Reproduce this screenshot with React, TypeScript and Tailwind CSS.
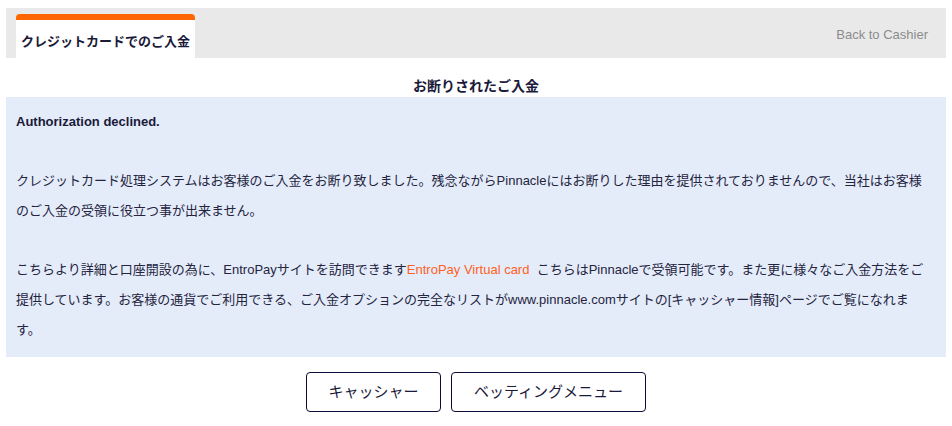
import React from "react";

const font = { fontFamily: '"Liberation Sans", Arial, "Noto Sans CJK JP", sans-serif' };

export default function App() {
  return (
    <div className="w-[952px] h-[426px] bg-white px-[6px] pt-[8px] text-[#1c1c3c]" style={font}>
      {/* header */}
      <div className="h-[50px] bg-[#e9e9e9] flex items-end justify-between">
        <div className="ml-[10px] w-[179px] h-[44px] flex flex-col">
          <div className="h-[6px] bg-[#ff6600] rounded-t-[4px]" />
          <div className="flex-1 bg-white pl-[5px] pt-[14px] text-[13px] leading-[16px] font-bold text-[#1a1a3a] whitespace-nowrap">
            クレジットカードでのご入金
          </div>
        </div>
        <div className="self-start mt-[19px] mr-[18px] text-[13px] leading-[16px] text-[#8c8c8c]">
          Back to Cashier
        </div>
      </div>

      {/* title */}
      <div className="h-[39px] pt-[18px] text-center text-[14px] leading-[20px] font-bold text-[#1a1a3a]">
        お断りされたご入金
      </div>

      {/* message box */}
      <div className="h-[260px] bg-[#e4ecf9] px-[10px] pt-[10px] text-[13px] leading-[29.7px] text-[#24243f]">
        <div className="font-bold text-[#1a1a3a]">Authorization declined.</div>
        <div className="h-[29.7px]" />
        <div>
          クレジットカード処理システムはお客様のご入金をお断り致しました。残念ながらPinnacleにはお断りした理由を提供されておりませんので、当社はお客様
          <br />
          のご入金の受領に役立つ事が出来ません。
        </div>
        <div className="h-[29.7px]" />
        <div>
          こちらより詳細と口座開設の為に、EntroPayサイトを訪問できます
          <span className="text-[#ff5f1f]">EntroPay Virtual card</span>
          {"\u00a0 "}こちらはPinnacleで受領可能です。また更に様々なご入金方法をご
          <br />
          提供しています。お客様の通貨でご利用できる、ご入金オプションの完全なリストがwww.pinnacle.comサイトの[キャッシャー情報]ページでご覧になれま
          <br />
          す。
        </div>
      </div>

      {/* buttons */}
      <div className="mt-[15px] flex justify-center gap-[10px]">
        <button className="h-[40px] w-[135px] border border-[#0b0b3b] rounded-[4px] bg-white text-[15px] text-[#1a1a3a]">
          キャッシャー
        </button>
        <button className="h-[40px] w-[195px] border border-[#0b0b3b] rounded-[4px] bg-white text-[15px] text-[#1a1a3a]">
          ベッティングメニュー
        </button>
      </div>
    </div>
  );
}
